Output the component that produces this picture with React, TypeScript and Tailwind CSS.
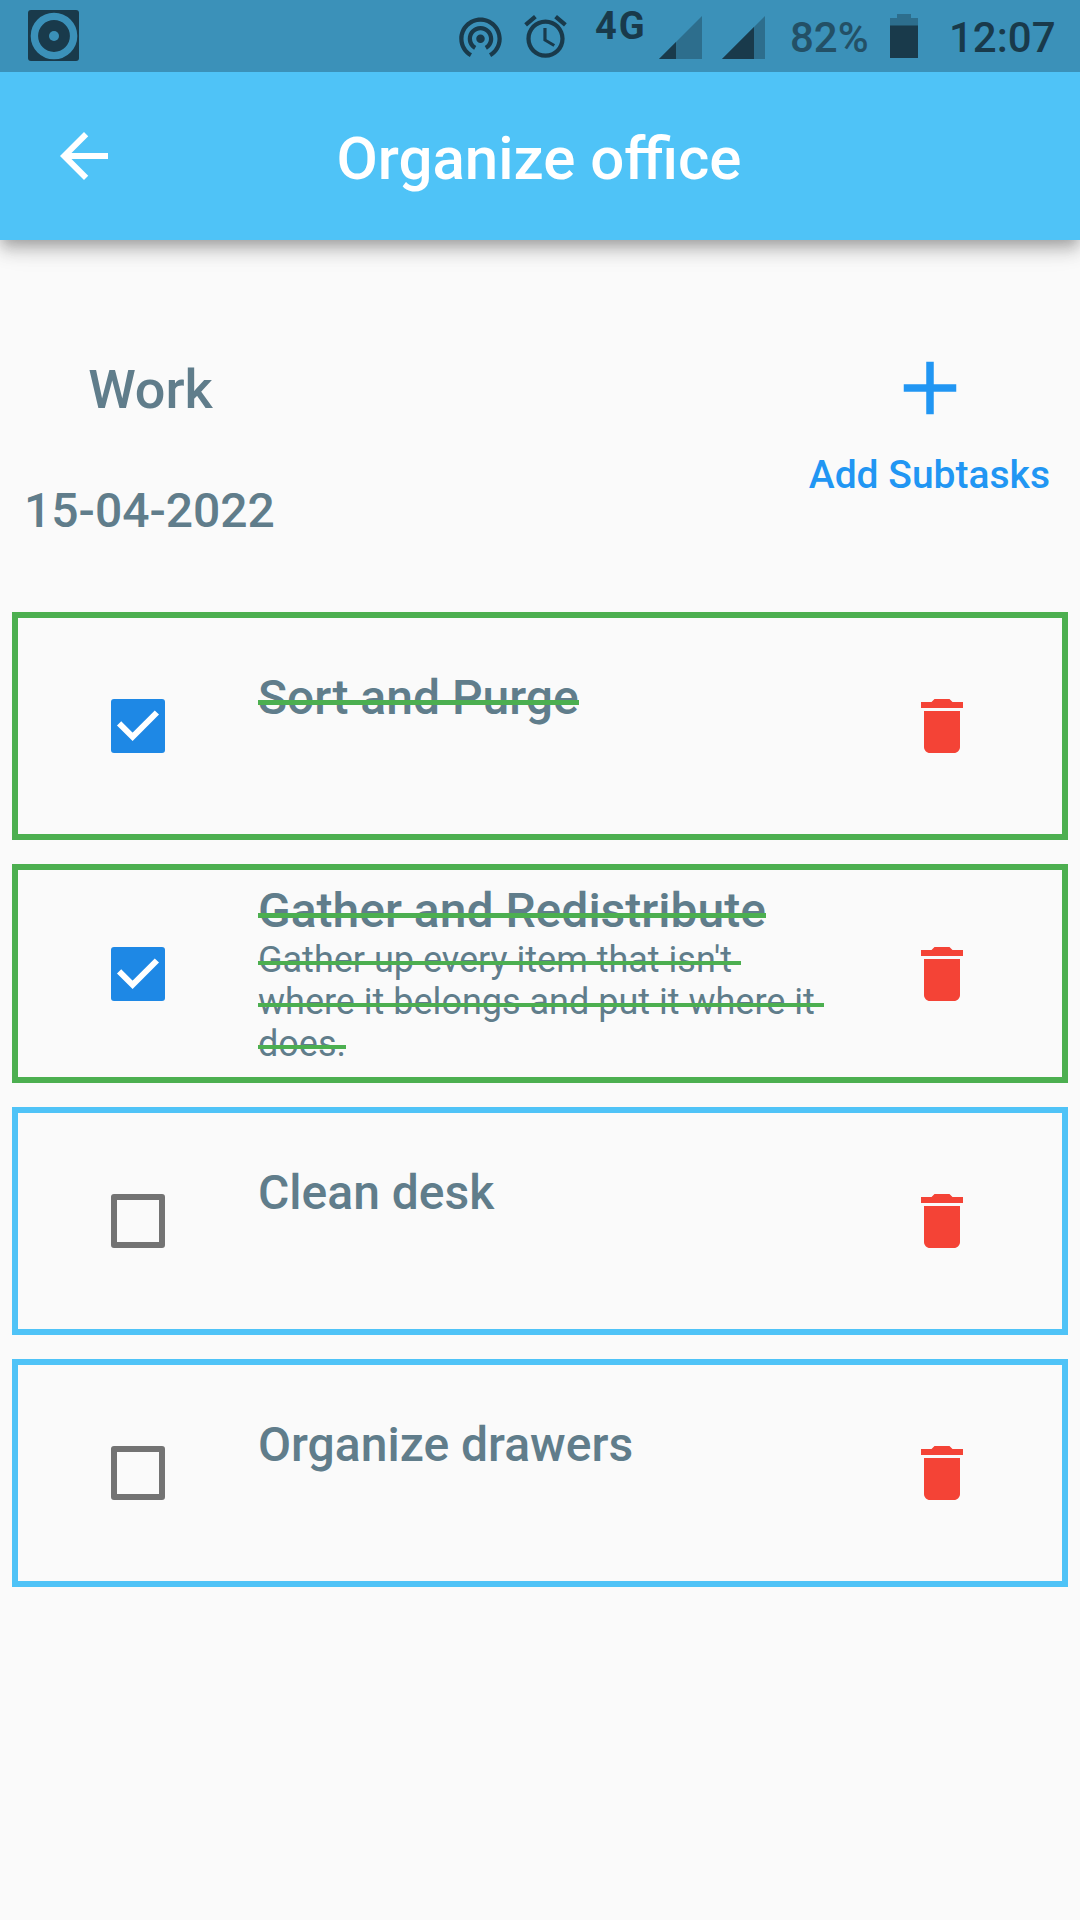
import React from "react";

type Subtask = { title: string; note: string[]; done: boolean };

const subtasks: Subtask[] = [
  { title: "Sort and Purge", note: [], done: true },
  {
    title: "Gather and Redistribute",
    note: ["Gather up every item that isn't ", "where it belongs and put it where it ", "does."],
    done: true,
  },
  { title: "Clean desk", note: [], done: false },
  { title: "Organize drawers", note: [], done: false },
];

function Icon({ d, className }: { d: string; className: string }) {
  return (
    <svg viewBox="0 0 24 24" fill="currentColor" className={className} aria-hidden="true">
      <path d={d} />
    </svg>
  );
}

const paths = {
  hotspot:
    "M12 11c-1.1 0-2 .9-2 2s.9 2 2 2 2-.9 2-2-.9-2-2-2zm6 2c0-3.31-2.69-6-6-6s-6 2.69-6 6c0 2.22 1.21 4.15 3 5.19l1-1.74c-1.19-.7-2-1.97-2-3.45 0-2.21 1.79-4 4-4s4 1.79 4 4c0 1.48-.81 2.75-2 3.45l1 1.74c1.79-1.04 3-2.97 3-5.19zM12 3C6.48 3 2 7.48 2 13c0 3.7 2.01 6.92 4.99 8.65l1-1.73C5.61 18.53 4 15.96 4 13c0-4.42 3.58-8 8-8s8 3.58 8 8c0 2.96-1.61 5.53-4 6.92l1 1.73c2.99-1.73 5-4.95 5-8.65 0-5.52-4.48-10-10-10z",
  alarm:
    "M22 5.72l-4.6-3.86-1.29 1.53 4.6 3.86L22 5.72zM7.88 3.39L6.6 1.86 2 5.71l1.29 1.53 4.59-3.85zM12.5 8H11v6l4.75 2.85.75-1.23-4-2.37V8zM12 4c-4.97 0-9 4.03-9 9s4.02 9 9 9c4.97 0 9-4.03 9-9s-4.03-9-9-9zm0 16c-3.87 0-7-3.13-7-7s3.13-7 7-7 7 3.13 7 7-3.13 7-7 7z",
  back: "M20 11H7.83l5.59-5.59L12 4l-8 8 8 8 1.41-1.41L7.83 13H20v-2z",
  add: "M19 13h-6v6h-2v-6H5v-2h6V5h2v6h6v2z",
  trash: "M6 19c0 1.1.9 2 2 2h8c1.1 0 2-.9 2-2V7H6v12zM19 4h-3.5l-1-1h-5l-1 1H5v2h14V4z",
};

function Signal({ level }: { level: number }) {
  return (
    <svg viewBox="0 0 43 43" className="mt-4 h-[43px] w-[43px]" aria-hidden="true">
      <path d="M0 43L43 0V43Z" fill="#2d6e8d" />
      <path d={`M0 43L${level} ${43 - level}V43Z`} fill="#193a4b" />
    </svg>
  );
}

function StatusBar() {
  return (
    <div className="relative z-10 flex h-[72px] items-start bg-[#3b91b9] text-[#193a4b]">
      <svg viewBox="0 0 51 51" className="mt-[10px] ml-7 h-[51px] w-[51px]" aria-hidden="true">
        <rect width="51" height="51" rx="3" fill="#193a4b" />
        <circle cx="26" cy="26" r="19.6" fill="none" stroke="#3b91b9" strokeWidth="7.4" />
        <circle cx="26" cy="26" r="5" fill="#3b91b9" />
      </svg>
      <Icon d={paths.hotspot} className="mt-[11px] ml-[376px] h-[51px] w-[51px]" />
      <Icon d={paths.alarm} className="mt-[11px] ml-[14px] h-[51px] w-[51px]" />
      <div className="mt-[4px] ml-6 w-[64px] text-[38px] leading-[44px] font-bold tracking-[2px]">4G</div>
      <Signal level={17} />
      <div className="ml-5 flex">
        <Signal level={32} />
      </div>
      <div className="mt-[13px] ml-[25px] w-[100px] text-[42px] leading-[50px] font-medium text-[#235066]">82%</div>
      <svg viewBox="0 0 28 44" className="mt-[14px] h-[44px] w-7" aria-hidden="true">
        <path d="M7 0H21V4H28V12H0V4H7Z" fill="#2d6e8d" />
        <rect y="11.5" width="28" height="32.5" fill="#193a4b" />
      </svg>
      <div className="mt-[13px] ml-[31px] text-[42px] leading-[50px] font-medium">12:07</div>
    </div>
  );
}

function Checkbox({ checked }: { checked: boolean }) {
  if (!checked) return <div className="h-[54px] w-[54px] rounded-[3px] border-[6px] border-[#737373]" />;
  return (
    <div className="h-[54px] w-[54px] rounded-[3px] bg-[#1e88e5]">
      <svg viewBox="0 0 54 54" fill="none" stroke="#fff" strokeWidth="6" className="h-full w-full" aria-hidden="true">
        <path d="M8.1 24.3L21.6 37.8L45.9 13.5" />
      </svg>
    </div>
  );
}

function Card({ task }: { task: Subtask }) {
  const hasNote = task.note.length > 0;
  return (
    <li
      className={`flex items-center border-[6px] pl-[93px] pr-[84px] ${hasNote ? "h-[219px]" : "h-[228px]"} ${
        task.done ? "border-[#4caf50]" : "border-[#4fc3f7]"
      }`}
    >
      <Checkbox checked={task.done} />
      <div className={`ml-[93px] flex-1 self-start text-[#607d8b] ${hasNote ? "pt-[13px]" : "pt-[52px]"}`}>
        <h2
          className={`relative w-max text-[48px] leading-[56px] font-medium ${
            task.done ? "after:absolute after:inset-x-0 after:top-[30px] after:h-[5px] after:bg-[#4caf50]" : ""
          }`}
        >
          {task.title}
        </h2>
        {task.note.map((line) => (
          <p
            key={line}
            className="relative w-max text-[36px] leading-[42px] whitespace-pre after:absolute after:inset-x-0 after:top-[22px] after:h-[4px] after:bg-[#4caf50]"
          >
            {line}
          </p>
        ))}
      </div>
      <Icon d={paths.trash} className="h-[72px] w-[72px] shrink-0 text-[#f44336]" />
    </li>
  );
}

export default function App() {
  return (
    <div className="h-[1920px] w-[1080px] overflow-hidden bg-[#fafafa] font-['Roboto',sans-serif]">
      <StatusBar />
      <header className="grid h-[168px] grid-cols-[120px_1fr_120px] items-center bg-[#4fc3f7] text-white shadow-[0_6px_12px_-3px_rgba(0,0,0,0.2),0_12px_15px_0_rgba(0,0,0,0.14),0_3px_30px_0_rgba(0,0,0,0.12)]">
        <Icon d={paths.back} className="ml-12 h-[72px] w-[72px]" />
        <h1 className="pt-[6px] pr-[2px] text-center text-[60px] leading-[70px] font-medium">Organize office</h1>
      </header>
      <section className="flex h-[372px] items-start justify-between pr-[30px] pl-6">
        <div className="flex flex-col items-center pt-[118px] text-[#607d8b] font-medium">
          <div className="pl-[2px] text-[54px] leading-[64px]">Work</div>
          <div className="mt-[61px] text-[48px] leading-[56px]">15-04-2022</div>
        </div>
        <div className="flex flex-col items-center pt-[103px] text-[#2196f3]">
          <Icon d={paths.add} className="ml-[2px] h-[90px] w-[90px]" />
          <div className="mt-[19px] text-[39px] leading-[46px] font-medium">Add Subtasks</div>
        </div>
      </section>
      <ul className="flex flex-col gap-6 px-3">
        {subtasks.map((task) => (
          <Card key={task.title} task={task} />
        ))}
      </ul>
    </div>
  );
}
